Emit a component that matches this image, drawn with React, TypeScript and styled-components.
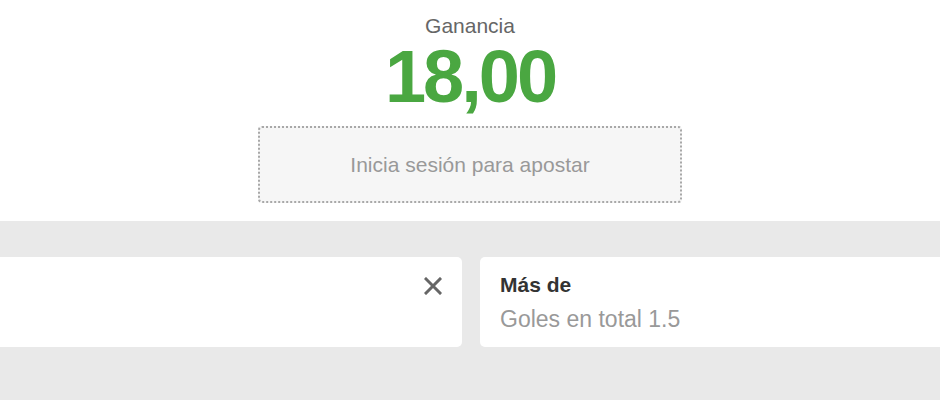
import React from "react";
import styled, { createGlobalStyle } from "styled-components";

const GlobalStyle = createGlobalStyle`
  * { box-sizing: border-box; }
  body {
    margin: 0;
    background: #e9e9e9;
    font-family: "Liberation Sans", Arial, Helvetica, sans-serif;
  }
`;

const Page = styled.div`
  width: 940px;
  height: 400px;
  overflow: hidden;
  display: flex;
  flex-direction: column;
`;

const Summary = styled.section`
  background: #ffffff;
  display: flex;
  flex-direction: column;
  align-items: center;
  padding: 13px 0 18px;
`;

const Label = styled.div`
  font-size: 21px;
  line-height: 26px;
  color: #666666;
`;

const Amount = styled.div`
  margin-top: -2px;
  font-size: 74px;
  line-height: 80px;
  font-weight: bold;
  letter-spacing: -3px;
  color: #4aa741;
`;

const LoginButton = styled.button`
  margin-top: 9px;
  width: 424px;
  height: 77px;
  background: #f6f6f6;
  border: 2px dotted #a8a8a8;
  border-radius: 4px;
  font-family: inherit;
  font-size: 21px;
  color: #999999;
  cursor: pointer;
`;

const Slip = styled.section`
  flex: 1;
  background: #e9e9e9;
  padding-top: 36px;
  overflow: hidden;
`;

const Track = styled.div`
  display: flex;
  gap: 18px;
  margin-left: -18px;
`;

const Card = styled.div`
  position: relative;
  flex: 0 0 480px;
  height: 90px;
  background: #ffffff;
  border-radius: 5px;
  padding: 15px 20px;
`;

const Title = styled.div`
  font-size: 21px;
  line-height: 26px;
  font-weight: bold;
  color: #333333;
`;

const Subtitle = styled.div`
  margin-top: 8px;
  font-size: 23px;
  line-height: 26px;
  color: #999999;
`;

const CloseButton = styled.button`
  position: absolute;
  top: 18px;
  right: 18px;
  width: 22px;
  height: 22px;
  padding: 0;
  border: none;
  background: transparent;
  cursor: pointer;
  display: flex;
  align-items: center;
  justify-content: center;
`;

type Selection = { id: string; title: string; market: string; removable?: boolean };

const selections: Selection[] = [
  { id: "a", title: "", market: "", removable: true },
  { id: "b", title: "Más de", market: "Goles en total 1.5" },
];

export default function App() {
  return (
    <>
      <GlobalStyle />
      <Page>
        <Summary>
          <Label>Ganancia</Label>
          <Amount>18,00</Amount>
          <LoginButton>Inicia sesión para apostar</LoginButton>
        </Summary>
        <Slip>
          <Track>
            {selections.map((s) => (
              <Card key={s.id}>
                {s.title && <Title>{s.title}</Title>}
                {s.market && <Subtitle>{s.market}</Subtitle>}
                {s.removable && (
                  <CloseButton aria-label="Quitar">
                    <svg width="18" height="18" viewBox="0 0 18 18">
                      <path d="M2 2L16 16M16 2L2 16" stroke="#666" strokeWidth="3" strokeLinecap="square" />
                    </svg>
                  </CloseButton>
                )}
              </Card>
            ))}
          </Track>
        </Slip>
      </Page>
    </>
  );
}
